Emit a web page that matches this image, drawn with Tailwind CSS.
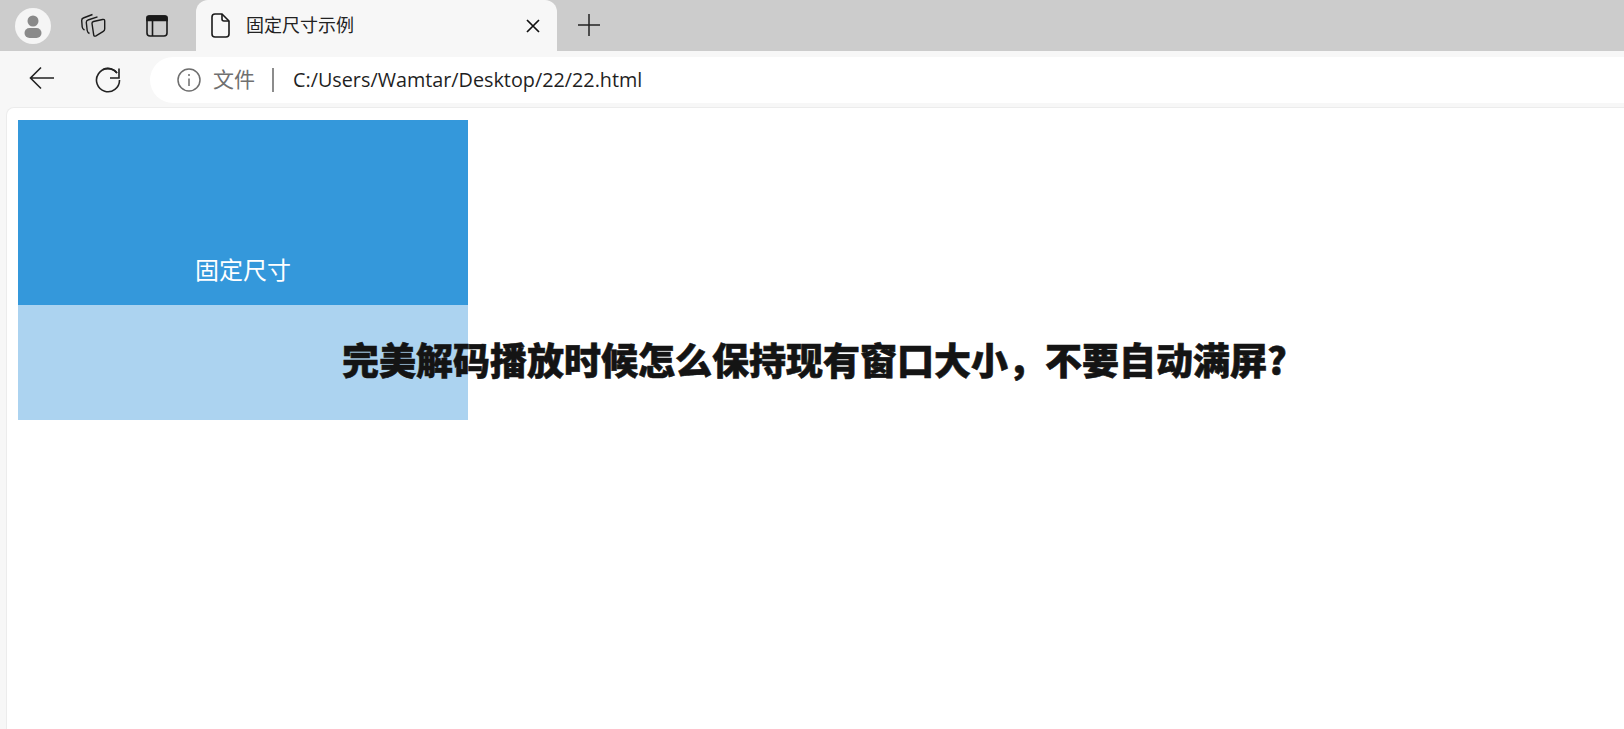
<!DOCTYPE html>
<html lang="zh-CN">

<head>
    <meta charset="UTF-8">
    <meta name="viewport" content="width=device-width, initial-scale=1.0">
    <script src="https://cdn.jsdelivr.net/npm/@tailwindcss/browser@4"></script>
    <title>固定尺寸示例</title>
</head>

<body class="h-[729px] w-[1624px] overflow-hidden bg-[#f7f7f7] font-['Noto_Sans_CJK_SC','Noto_Sans',sans-serif]">

    <!-- tab strip -->
    <div class="flex h-[51px] items-center bg-[#cccccc]">
        <div class="ml-[15px] flex h-9 w-9 items-center justify-center rounded-full bg-[#f5f5f5]">
            <svg width="24" height="26" viewBox="0 0 24 26" fill="#8a8a8a">
                <circle cx="12" cy="8" r="5.5" />
                <rect x="3.5" y="15" width="17" height="10" rx="5" />
            </svg>
        </div>
        <svg class="ml-[30px]" width="25" height="25" viewBox="0 0 25 25" fill="none" stroke="#1a1a1a" stroke-width="1.4">
            <path d="M3.5 17 Q1.5 16 1.2 14 L0.7 7.5 Q0.7 5.5 2.3 5 L11.5 1.5" />
            <path d="M8.5 20.5 Q6.5 19.5 6.2 17.5 L5.3 9.5 Q5.2 7.5 7 7 L16.5 3.8" />
            <path d="M12.5 8.5 L21.5 6.5 Q23.7 6 23.7 8 V16 Q23.7 17.5 22.3 18.3 L15 22.8 Q13 23.8 12.7 21.8 L11 10.5 Q10.8 9 12.5 8.5 Z" />
        </svg>
        <svg class="ml-[40px]" width="22" height="22" viewBox="0 0 22 22" fill="none" stroke="#1a1a1a" stroke-width="1.6">
            <rect x="1" y="1" width="20" height="20" rx="3" />
            <path d="M1 5.5 H21 V2.5 Q21 1 19 1 H3 Q1 1 1 2.5 Z" fill="#1a1a1a" />
            <path d="M6.5 5.5 V21" />
        </svg>
        <div class="ml-[28px] flex h-[51px] w-[361px] items-center self-start rounded-t-xl bg-[#f7f7f7] pl-[15px]">
            <svg width="19" height="25" viewBox="0 0 19 25" fill="none" stroke="#1a1a1a" stroke-width="1.6">
                <path d="M1 4 Q1 1 4 1 H11 L18 8 V21 Q18 24 15 24 H4 Q1 24 1 21 Z" />
                <path d="M11 1 V6 Q11 8 13 8 H18" />
            </svg>
            <span class="ml-[16px] pb-[3px] text-[18px] leading-none text-[#222222]">固定尺寸示例</span>
            <svg class="ml-auto mr-[17px]" width="14" height="14" viewBox="0 0 14 14" stroke="#111111" stroke-width="1.7">
                <path d="M1 1 L13 13 M13 1 L1 13" />
            </svg>
        </div>
        <svg class="ml-[21px] mb-[2px]" width="22" height="22" viewBox="0 0 22 22" stroke="#222222" stroke-width="1.5">
            <path d="M0 11 H22 M11 0 V22" />
        </svg>
    </div>

    <!-- address bar -->
    <div class="flex h-[56px] items-start bg-[#f7f7f7] pt-[6px]">
        <svg class="ml-[29px] mt-[9px]" width="26" height="24" viewBox="0 0 26 24" fill="none" stroke="#222222" stroke-width="1.6">
            <path d="M25 12 H1.5 M12 1.5 L1.5 12 L12 22.5" />
        </svg>
        <svg class="ml-[40px] mt-[10px]" width="26" height="26" viewBox="0 0 26 26" fill="none" stroke="#222222" stroke-width="1.6">
            <path d="M22 6 A11.5 11.5 0 1 0 24.5 13" />
            <path d="M8 2.5 A11.5 11.5 0 0 1 22 6" />
            <path d="M24 1.5 V11 H15" />
        </svg>
        <div class="ml-[29px] flex h-[46px] flex-1 items-center rounded-l-[23px] bg-white pl-[27px] text-[#1f1f1f]">
            <svg width="24" height="24" viewBox="0 0 24 24" fill="none" stroke="#6e6e6e" stroke-width="1.5">
                <circle cx="12" cy="12" r="11" />
                <path d="M12 10.5 V18 M12 6 V8" />
            </svg>
            <span class="ml-[12px] pb-[3px] text-[21px] leading-none text-[#707070]">文件</span>
            <span class="ml-[17px] h-[24px] w-[2px] bg-[#8c8c8c]"></span>
            <span class="ml-[19px] font-['Open_Sans'] text-[19.8px] leading-none">C:/Users/Wamtar/Desktop/22/22.html</span>
        </div>
    </div>

    <!-- page -->
    <div class="relative ml-[6px] h-[622px] rounded-tl-lg border-t border-l border-[#ececec] bg-white pl-[11px] pt-[12px]">
        <div class="flex h-[300px] w-[450px] flex-col bg-[#acd3f0]">
            <div class="flex h-[185px] items-end justify-center bg-[#3498db] pb-[24px] text-[24px] leading-none text-white">固定尺寸</div>
        </div>
        <h1 class="absolute left-[335px] top-[226px] whitespace-nowrap text-[37px] leading-[50px] font-black text-[#141414] [-webkit-text-stroke:0.6px_#141414]">完美解码播放时候怎么保持现有窗口大小，不要自动满屏?</h1>
    </div>

</body>

</html>
